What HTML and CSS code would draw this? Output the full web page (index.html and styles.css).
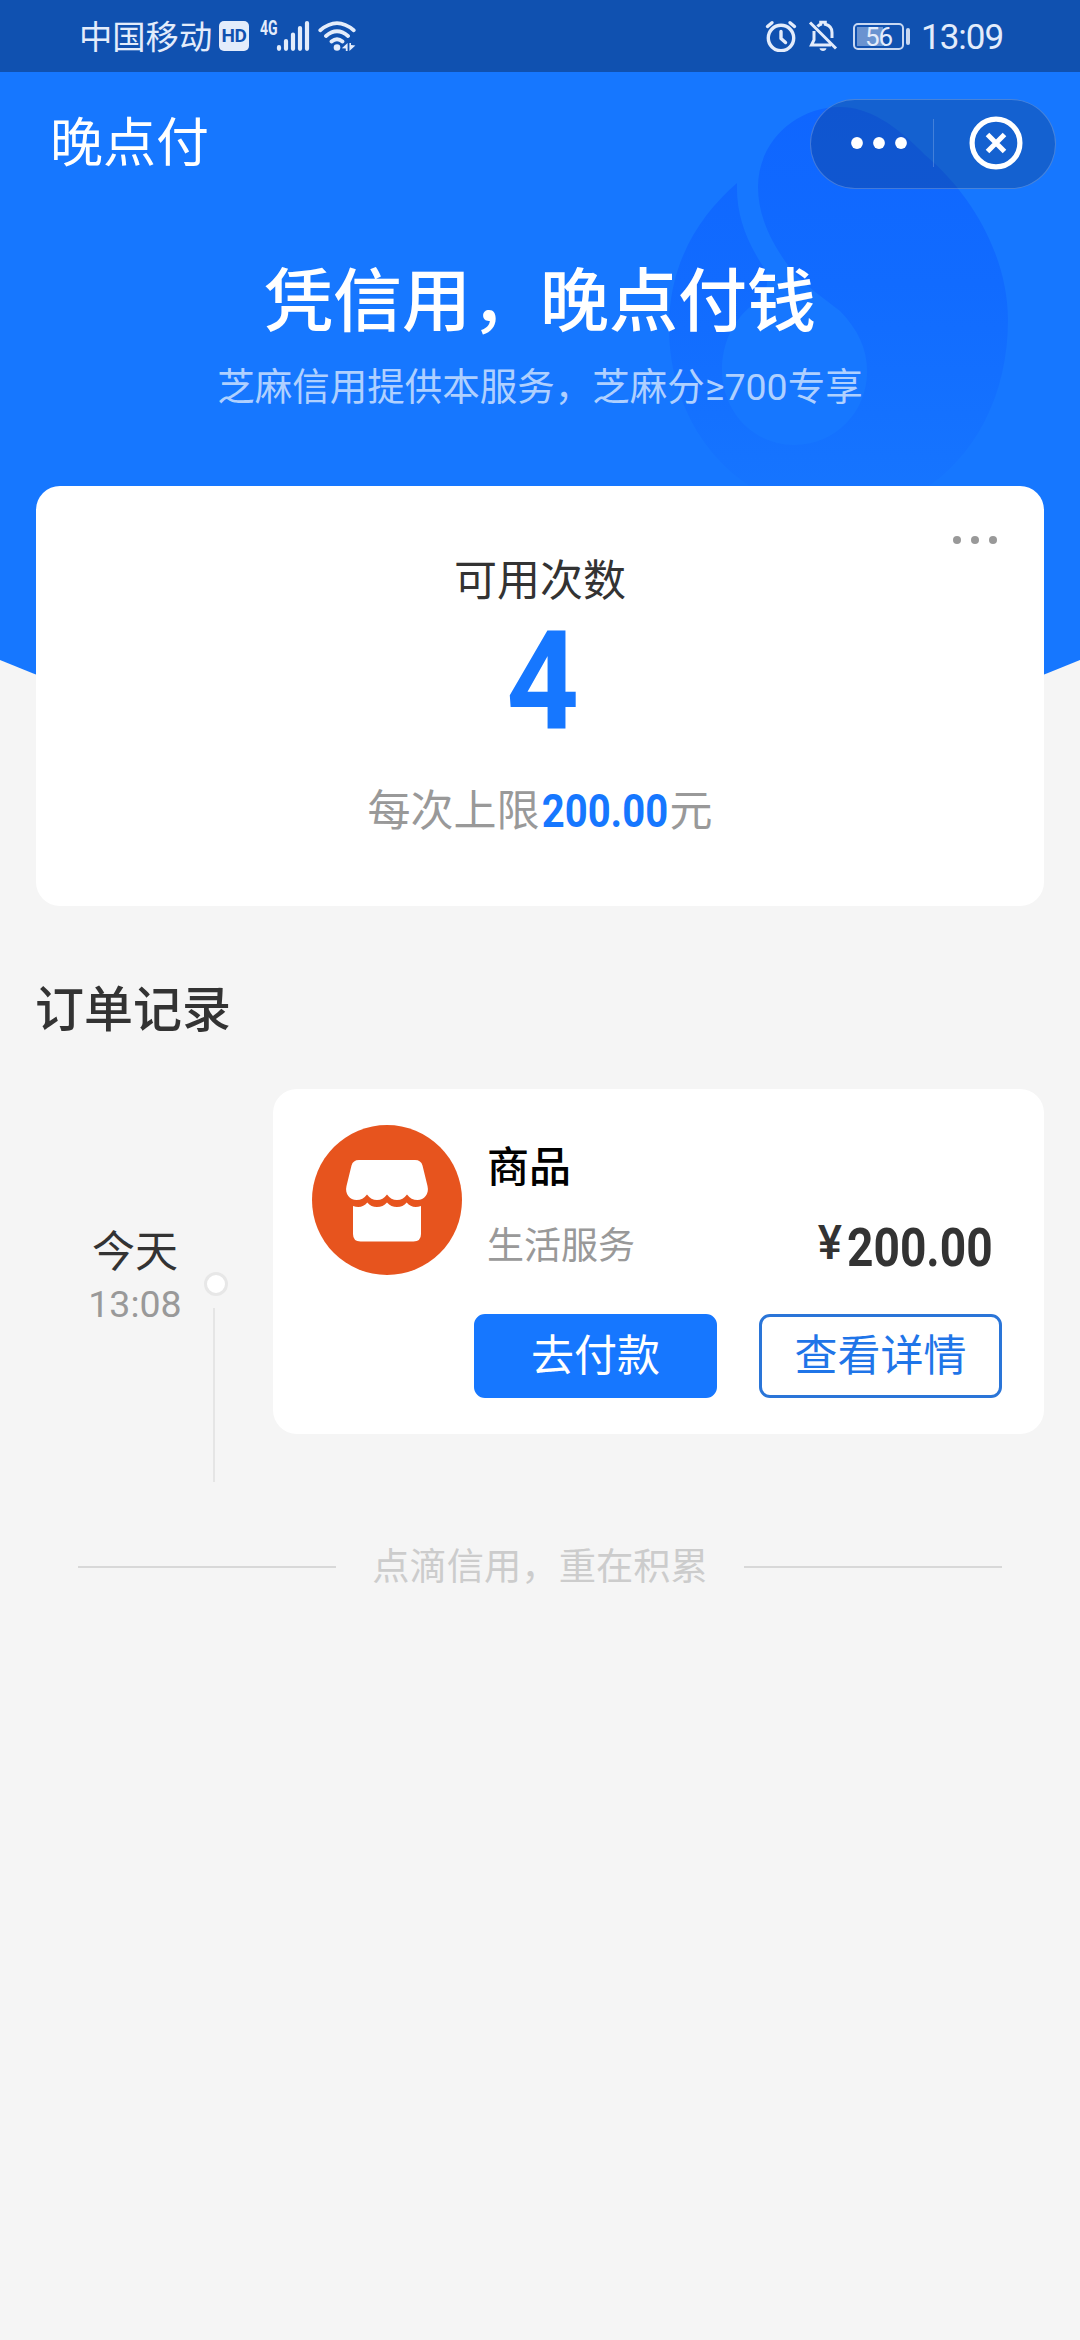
FILE: index.html
```html
<!DOCTYPE html>
<html lang="zh-CN">
<head>
<meta charset="utf-8">
<title>晚点付</title>
<link rel="stylesheet" href="styles.css">
</head>
<body>
<div class="screen">
  <svg class="backdrop" width="1080" height="780" viewBox="0 0 1080 780" aria-hidden="true">
    <defs>
      <linearGradient id="drop" x1="0" y1="107" x2="0" y2="500" gradientUnits="userSpaceOnUse">
        <stop offset="0" stop-color="#0f66ff"/>
        <stop offset="0.45" stop-color="#116bff"/>
        <stop offset="1" stop-color="#1675ff"/>
      </linearGradient>
    </defs>
    <path fill="#1677ff" d="M0 0H1080V660Q540 886 0 660Z"/>
    <path fill="url(#drop)" d="M737 183C700 215 669 262 669 327C669 400 705 462 760 492H920C975 458 1008 395 1008 320C1008 255 970 192 925 155C895 124 868 107 840 107C795 107 758 142 758 187C758 215 770 240 787 264C800 282 822 297 840 311C858 330 867 348 867 372C867 412 835 445 794 445C754 445 722 412 722 370C722 345 732 322 750 307C764 297 772 286 764 268C746 240 736 215 737 183Z"/>
  </svg>

  <header class="status">
    <div class="status-group">
      <span class="carrier">中国移动</span>
      <span class="hd">HD</span>
      <span class="net">4G</span>
      <svg class="signal" width="34" height="32" viewBox="0 0 34 32" stroke="#e3ecfb" stroke-width="4.2" stroke-linecap="round"><path d="M3 27.2V28.8M10 21V28.8M17 14.6V28.8M24 8V28.8M31 3V28.8"/></svg>
      <svg class="wifi" width="38" height="32" viewBox="0 0 38 32" fill="none" stroke="#e3ecfb" stroke-width="3.8" stroke-linecap="round"><path d="M2.300 10.200Q19-4 35.700 10.200M8 16Q19 6.500 30 16M13.500 21.500Q19 17 24.500 21.500"/><circle cx="19" cy="27.500" r="3.300" fill="#e3ecfb" stroke="none"/><path fill="#e3ecfb" stroke="none" d="M29.600 23V31H27.800V28.600L23.800 28.200ZM31.400 31V23H33V25L37.400 25.400Z"/></svg>
    </div>
    <div class="status-group">
      <svg class="alarm" width="32" height="32" viewBox="0 0 32 32" fill="none" stroke="#e3ecfb" stroke-width="3.400" stroke-linecap="round" stroke-linejoin="round"><circle cx="16" cy="18" r="12.700"/><path d="M16 11.500V18.500L20.500 22.500M2.500 6.500L7 2.700M29.500 6.500L25 2.700"/></svg>
      <svg class="bell" width="30" height="32" viewBox="0 0 30 32" fill="none" stroke="#e3ecfb" stroke-width="3"><path d="M2 2.500L28 28.500M6 11V20L3.500 25H23M9.500 6.500Q11 4.800 12.700 4.300V2.300H17.300V4.300Q24 6 24 12.500V18"/><path fill="#e3ecfb" stroke="none" d="M11.500 28.300H18.500Q17.800 31 15 31Q12.200 31 11.500 28.300Z"/></svg>
      <span class="battery"><span class="battery-text">56</span></span>
      <span class="clock">13:09</span>
    </div>
  </header>

  <nav class="nav">
    <h1 class="nav-title">晚点付</h1>
    <div class="capsule">
      <svg class="more" width="56" height="14" viewBox="0 0 56 14" fill="#fff"><circle cx="6" cy="7" r="5.900"/><circle cx="28" cy="7" r="5.900"/><circle cx="50" cy="7" r="5.900"/></svg>
      <span class="divider"></span>
      <svg class="close" width="54" height="54" viewBox="0 0 54 54" fill="none" stroke="#fff" stroke-width="5.200"><circle cx="27" cy="27" r="23.900"/><path stroke-width="5" d="M18.500 18.500L35.500 35.500M35.500 18.500L18.500 35.500"/></svg>
    </div>
  </nav>

  <section class="hero">
    <h2 class="hero-title">凭信用，晚点付钱</h2>
    <p class="hero-sub">芝麻信用提供本服务，芝麻分≥700专享</p>
  </section>

  <section class="quota">
    <svg class="quota-more" width="46" height="10" viewBox="0 0 46 10" fill="#999"><circle cx="5" cy="5" r="4"/><circle cx="23" cy="5" r="4"/><circle cx="41" cy="5" r="4"/></svg>
    <p class="quota-label">可用次数</p>
    <p class="quota-count"><span>4</span></p>
    <p class="quota-limit">每次上限<span class="limit-box"><b>200.00</b></span>元</p>
  </section>

  <h3 class="section-title">订单记录</h3>

  <section class="order-row">
    <div class="order-time">
      <span class="day">今天</span>
      <span class="hour">13:08</span>
    </div>
    <div class="rail"><span class="rail-dot"></span><span class="rail-line"></span></div>
    <article class="order">
      <div class="order-head">
        <svg class="shop" width="150" height="150" viewBox="0 0 150 150"><circle cx="75" cy="75" r="75" fill="#e7541e"/><path fill="#fff" d="M47 35H103Q109 35 110.500 40.500L115.500 61C117.500 69 112 75 105.500 75Q99 75 95 69.500Q91 75 85 75Q79 75 75 69.500Q71 75 65 75Q59 75 55 69.500Q51 75 44.500 75C38 75 32.500 69 34.500 61L39.500 40.500Q41 35 47 35Z"/><path fill="#fff" d="M41 81Q50 84 55.300 77.500Q59 82 65 82Q71 82 75 77.500Q79 82 85 82Q91 82 94.700 77.500Q100 84 109 81V109Q109 116.500 101.500 116.500H48.500Q41 116.500 41 109Z"/></svg>
        <div class="order-info">
          <p class="order-name">商品</p>
          <p class="order-type">生活服务</p>
        </div>
        <p class="price"><span class="yen">¥</span><span class="amount-box"><b>200.00</b></span></p>
      </div>
      <div class="order-actions">
        <button class="btn btn-primary">去付款</button>
        <button class="btn btn-outline">查看详情</button>
      </div>
    </article>
  </section>

  <footer class="slogan"><span class="rule"></span><span>点滴信用，重在积累</span><span class="rule"></span></footer>
</div>
</body>
</html>
```

FILE: styles.css
```css
* { box-sizing: border-box; margin: 0; padding: 0; }
body {
  background: #f5f5f5;
  font-family: Roboto, "Noto Sans CJK SC", sans-serif;
  color: #333;
}
h1, h2, h3 { font-weight: 400; }
svg { display: block; flex: none; }
.screen {
  position: relative;
  width: 1080px;
  height: 2340px;
  overflow: hidden;
  display: flex;
  flex-direction: column;
}
.backdrop { position: absolute; left: 0; top: 0; z-index: -1; }

/* Status bar */
.status {
  height: 72px;
  flex: none;
  padding: 0 76px 0 79px;
  display: flex;
  justify-content: space-between;
  color: #e3ecfb;
  background: #1051b0;
}
.status-group { display: flex; align-items: flex-start; padding-top: 20px; }
.carrier { font-size: 33.3px; line-height: 36px; width: 134px; white-space: nowrap; }
.hd {
  width: 30px; height: 30px; margin: 1px 0 0 6px;
  border-radius: 5px;
  background: #e3ecfb; color: #1051b0;
  font-size: 19px; line-height: 30px; font-weight: 700; text-align: center; letter-spacing: -.5px;
}
.net {
  width: 17px; margin-left: 11px;
  font-size: 20px; line-height: 16px; font-weight: 700; white-space: nowrap;
  transform: scaleX(.7); transform-origin: left;
}
.signal { margin-left: -1px; }
.wifi { margin-left: 8px; }
.bell { margin-left: 11px; }
.battery {
  position: relative;
  width: 51px; height: 27px; margin: 3px 0 0 15px;
  border: 2px solid #c8d8f2; border-radius: 5px;
  background: linear-gradient(90deg, #6a93d0 0 26px, transparent 26px) 2px 2px / 43px 19px no-repeat;
}
.battery::after {
  content: ""; position: absolute; left: 51px; top: 3px;
  width: 4px; height: 17px; border-radius: 2px; background: #c8d8f2;
}
.battery-text { display: block; font-size: 26px; line-height: 24px; text-align: center; letter-spacing: -1px; }
.clock { font-size: 35px; line-height: 36px; margin-left: 17px; letter-spacing: -1px; width: 83px; white-space: nowrap; }

/* Title bar */
.nav {
  height: 144px;
  flex: none;
  padding: 27px 24px 0 50px;
  display: flex;
  justify-content: space-between;
}
.nav-title { font-size: 53px; line-height: 90px; color: #fff; }
.capsule {
  width: 246px; height: 90px;
  border: 1px solid rgba(255, 255, 255, .22);
  border-radius: 45px;
  background: rgba(15, 45, 100, .3);
  display: flex; align-items: center;
  padding: 0 0 2px 40px;
}
.divider { width: 1px; height: 48px; background: rgba(255, 255, 255, .2); margin-left: 26px; }
.close { margin-left: 35px; }

/* Headline */
.hero { height: 270px; flex: none; padding-top: 43px; text-align: center; color: #fff; }
.hero-title { font-size: 69px; line-height: 88px; font-weight: 500; }
.hero-sub { font-size: 37.5px; line-height: 50px; margin-top: 15px; color: #afd0ff; }

/* Quota card */
.quota {
  height: 420px; flex: none; margin: 0 36px;
  border-radius: 24px; background: #fff;
  display: flex; flex-direction: column; align-items: center;
  padding: 49px 46px 0;
}
.quota-more { align-self: flex-end; }
.quota-label { font-size: 43px; line-height: 56px; margin-top: 8px; }
.quota-count { height: 104px; margin: 20px 0 0 6px; color: #1677ff; }
.quota-count span { display: block; font-size: 138px; line-height: 104px; font-weight: 700; transform: scaleX(.92); }
.quota-limit { font-size: 43px; line-height: 60px; margin-top: 48px; color: #999; display: flex; }
.limit-box { width: 130px; }
.limit-box b {
  display: block; width: 150px; padding: 0 0 0 2px;
  font-size: 46px; color: #1677ff;
  transform: scaleX(.87); transform-origin: left;
}

/* Orders */
.section-title { font-size: 49px; font-weight: 500; line-height: 64px; margin: 73px 35px 0; }
.order-row { display: flex; margin: 46px 36px 0 0; height: 400px; flex: none; }
.order-time { width: 203px; padding: 134px 0 0 67px; display: flex; flex-direction: column; align-items: center; }
.day { font-size: 43px; line-height: 58px; }
.hour { font-size: 37.5px; line-height: 44px; margin-top: 1px; color: #999; }
.rail { width: 70px; padding-top: 183px; }
.rail-dot { display: block; width: 24px; height: 24px; margin-left: 1px; border-radius: 50%; border: 3px solid #e7e7e7; background: #fff; }
.rail-line { display: block; width: 2px; height: 174px; margin: 12px 0 0 10px; background: #e5e5e5; }
.order { width: 771px; height: 345px; border-radius: 24px; background: #fff; padding: 36px 42px 0 39px; }
.order-head { display: flex; }
.order-info { margin-left: 25px; padding-top: 16px; }
.order-name { font-size: 42px; font-weight: 500; line-height: 54px; color: #000; }
.order-type { font-size: 37px; line-height: 48px; color: #999; margin-top: 28px; }
.price { margin-left: auto; display: flex; padding-top: 90px; height: 150px; }
.yen { font-size: 48px; line-height: 60px; font-weight: 500; transform: scaleX(.95); margin-top: -2px; }
.amount-box { width: 155px; margin-left: 5px; }
.amount-box b { display: block; width: 180px; font-size: 53px; line-height: 66px; transform: scaleX(.87); transform-origin: left; }
.order-actions { display: flex; justify-content: flex-end; gap: 42px; margin-top: 39px; }
.btn { width: 243px; height: 84px; border-radius: 11px; border: 3px solid #1677ff; font: 400 43px/78px Roboto, "Noto Sans CJK SC", sans-serif; }
.btn-primary { background: #1677ff; color: #fff; }
.btn-outline { background: #fff; color: #1f75e8; border-color: #2a75d8; }

/* Closing slogan */
.slogan { display: flex; align-items: center; justify-content: space-between; margin: 52px 78px 0; height: 52px; font-size: 37.3px; line-height: 52px; color: #ccc; }
.rule { width: 258px; height: 2px; background: #d8d8d8; }
```
